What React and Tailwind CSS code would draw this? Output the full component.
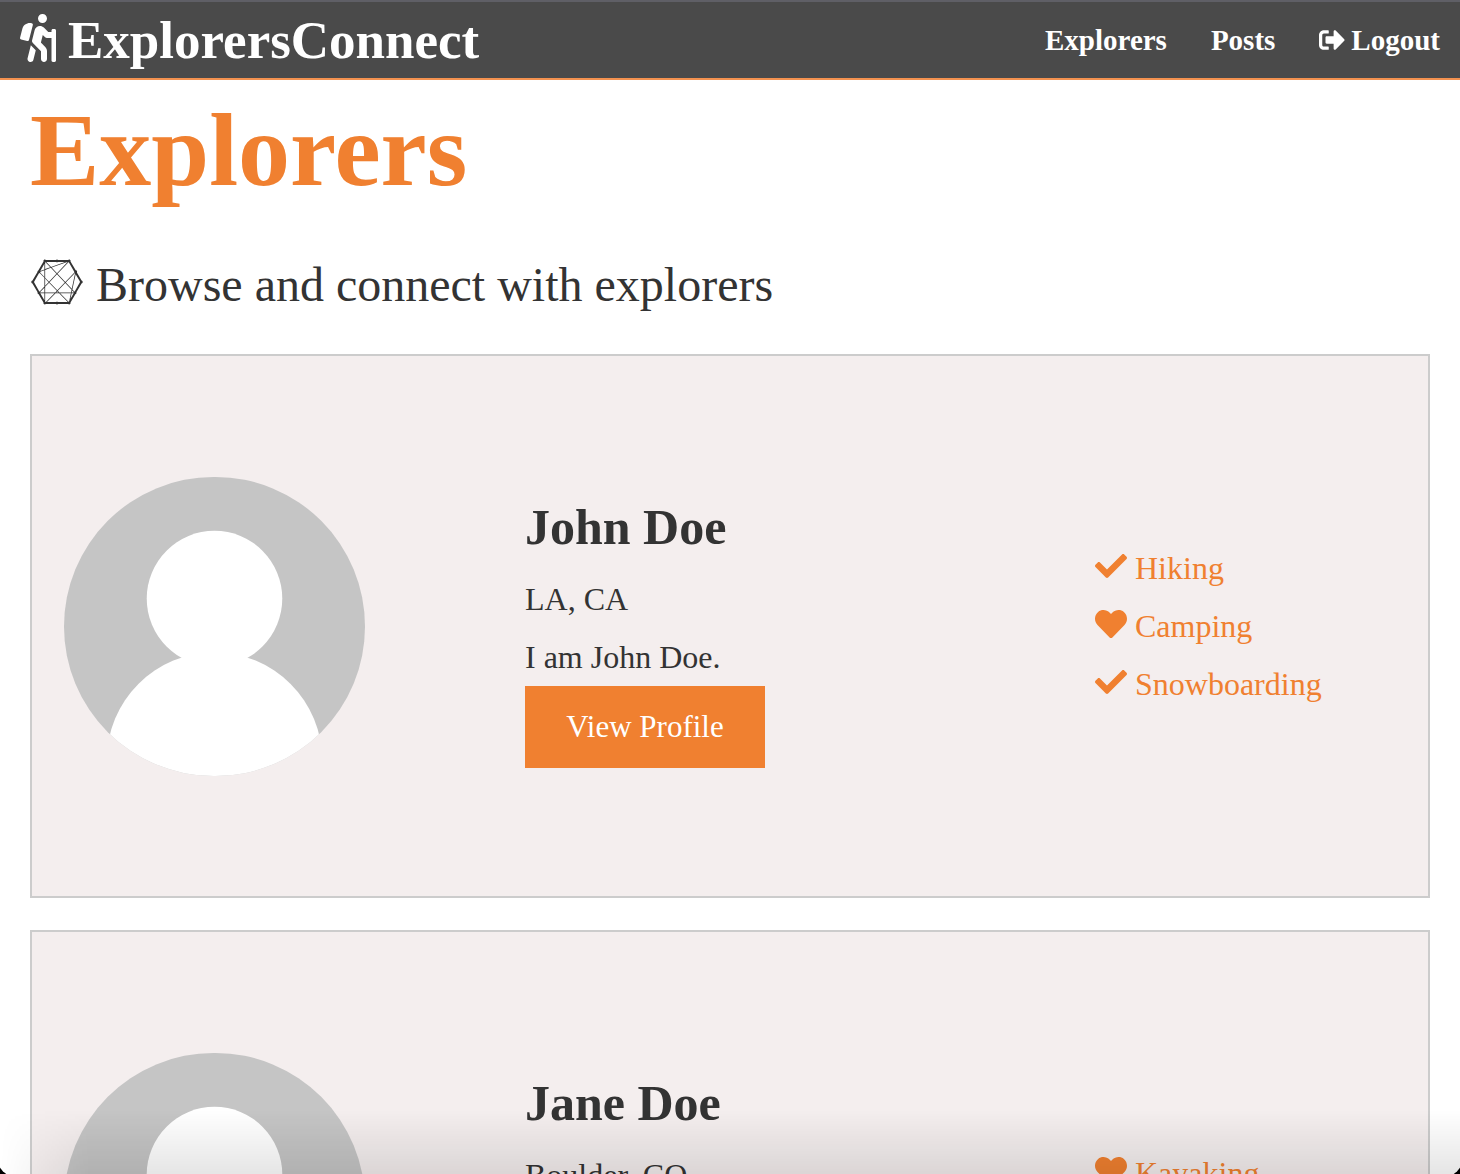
import React from "react";
import {
  FaHiking,
  FaSignOutAlt,
  FaConnectdevelop,
  FaCheck,
  FaHeart,
} from "react-icons/fa";

const explorers = [
  {
    name: "John Doe",
    location: "LA, CA",
    bio: "I am John Doe.",
    interests: [
      { label: "Hiking", icon: FaCheck },
      { label: "Camping", icon: FaHeart },
      { label: "Snowboarding", icon: FaCheck },
    ],
  },
  {
    name: "Jane Doe",
    location: "Boulder, CO",
    bio: "I am Jane Doe.",
    interests: [
      { label: "Kayaking", icon: FaHeart },
      { label: "Hiking", icon: FaCheck },
    ],
  },
];

function Navbar() {
  return (
    <nav className="flex h-20 items-center justify-between border-t-2 border-b-2 border-t-[#5f5f66] border-b-[#f49250] bg-[#4a4a4a] px-5 font-bold text-white">
      <a href="#home" className="flex items-center gap-3 text-[53px] leading-none">
        <FaHiking className="mb-1 h-12 w-9" />
        <span>ExplorersConnect</span>
      </a>
      <ul className="flex items-center gap-11 text-[29px] leading-none">
        <li>
          <a href="#explorers">Explorers</a>
        </li>
        <li>
          <a href="#posts">Posts</a>
        </li>
        <li>
          <a href="#logout" className="flex items-center gap-1.5">
            <FaSignOutAlt className="size-[26px]" />
            <span>Logout</span>
          </a>
        </li>
      </ul>
    </nav>
  );
}

function Avatar({ name }) {
  return (
    <svg
      viewBox="0 0 302 300"
      role="img"
      aria-label={name}
      className="w-full overflow-hidden rounded-full bg-[#c5c5c5]"
    >
      <circle cx="151" cy="122" r="68" fill="#fff" />
      <circle cx="151" cy="284" r="108" fill="#fff" />
    </svg>
  );
}

function ExplorerCard({ name, location, bio, interests }) {
  return (
    <article className="grid min-h-[544px] grid-cols-[1fr_2fr_1fr] items-center gap-16 border-2 border-[#cccccc] bg-[#f4eeee] px-8 text-[32px] leading-[58px]">
      <Avatar name={name} />
      <div className="ml-24">
        <h2 className="text-[50px] leading-[85px] font-bold">{name}</h2>
        <p>{location}</p>
        <p>{bio}</p>
        <a
          href="#profile"
          className="flex h-[82px] w-60 items-center justify-center bg-[#f08030] text-[31px] text-white"
        >
          View Profile
        </a>
      </div>
      <ul className="text-[#f08030]">
        {interests.map(({ label, icon: Icon }) => (
          <li key={label} className="flex items-center gap-2">
            <Icon className="mb-1 size-8" />
            <span>{label}</span>
          </li>
        ))}
      </ul>
    </article>
  );
}

export default function App() {
  return (
    <div className="h-screen overflow-hidden bg-white font-['Baskerville','Liberation_Serif',serif] text-[#333333]">
      <Navbar />
      <main className="px-[30px] pt-3">
        <h1 className="text-[104px] leading-[116px] font-bold text-[#f08030]">
          Explorers
        </h1>
        <p className="mt-10 mb-8 flex items-center gap-3 text-[48px] leading-[74px]">
          <FaConnectdevelop className="mb-1.5 h-12 w-[54px]" />
          <span>Browse and connect with explorers</span>
        </p>
        <div className="flex flex-col gap-8">
          {explorers.map((explorer) => (
            <ExplorerCard key={explorer.name} {...explorer} />
          ))}
        </div>
      </main>
      <div className="pointer-events-none fixed inset-x-0 bottom-0 h-16 bg-linear-to-b from-transparent to-black/10 [mask-image:linear-gradient(to_right,transparent,black_90px)]" />
      <div className="pointer-events-none fixed -inset-[3px] rounded-b-[20px] shadow-[0_0_0_20px_#000000]" />
    </div>
  );
}
